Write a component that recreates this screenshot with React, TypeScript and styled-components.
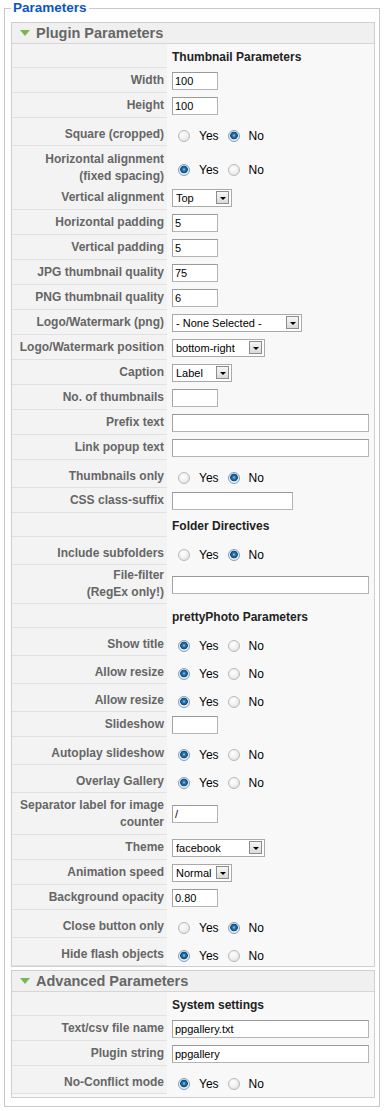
import React from "react";
import styled, { createGlobalStyle } from "styled-components";

const GlobalStyle = createGlobalStyle`
  html, body {
    margin: 0;
    padding: 0;
    background: #ffffff;
  }
  body {
    font-family: "Liberation Sans", Arial, Helvetica, sans-serif;
    font-size: 12px;
    color: #333333;
  }
  #root {
    width: 386px;
  }
`;

const ParamsFieldset = styled.fieldset`
  margin: 0 6px 0 4px;
  padding: 6px 4px 8px 6px;
  border: 1px solid #c9c9c9;
  min-width: 0;
  legend {
    padding: 0 2px;
    font-size: 13.5px;
    line-height: 16px;
    font-weight: bold;
    color: #0b55c4;
  }
`;

const Panel = styled.div<{ $padBottom?: number }>`
  border: 1px solid #cfcfcf;
  background: #f8f8f8;
  padding-bottom: ${(p) => p.$padBottom ?? 0}px;
  & + & {
    margin-top: 3px;
  }
`;

const PanelHeader = styled.div`
  height: 20px;
  display: flex;
  align-items: center;
  gap: 6px;
  padding-left: 8px;
  background: #f0f0f0;
  border-bottom: 1px solid #d6d6d6;
  font-size: 14.5px;
  font-weight: bold;
  color: #666666;
`;

const Row = styled.div<{ $h: number }>`
  display: grid;
  grid-template-columns: 155px 1fr;
  height: ${(p) => p.$h}px;
`;

// label cell, $top pushes the text down to line up with radio buttons
const Key = styled.div<{ $top?: number }>`
  display: flex;
  align-items: center;
  justify-content: flex-end;
  padding: ${(p) => p.$top ?? 0}px 3px 0 6px;
  text-align: right;
  white-space: pre-line;
  background: #f3f3f3;
  border-bottom: 1px solid #e1e1e1;
  font-weight: bold;
  color: #666666;
  line-height: 17px;
`;

const Value = styled.div<{ $top?: number }>`
  display: flex;
  align-items: center;
  padding-left: 5px;
  padding-top: ${(p) => p.$top ?? 0}px;
`;

const SectionTitle = styled.span`
  font-weight: bold;
  color: #222222;
`;

const TextInput = styled.input<{ $w: number }>`
  box-sizing: border-box;
  width: ${(p) => p.$w}px;
  height: 18px;
  margin: 0;
  border: 1px solid #b4b4b4;
  border-top-color: #999999;
  border-left-color: #a3a3a3;
  padding: 0 2px;
  font: 11px "Liberation Sans", Arial, sans-serif;
  color: #000000;
  background: #ffffff;
  outline: none;
`;

const SelectBox = styled.div<{ $w: number }>`
  box-sizing: border-box;
  width: ${(p) => p.$w}px;
  height: 18px;
  border: 1px solid #a9a9a9;
  background: #ffffff;
  display: flex;
  align-items: center;
  justify-content: space-between;
  padding: 0 2px 0 3px;
  font-size: 11px;
  color: #000000;
  white-space: nowrap;
`;

const SelectArrow = styled.span`
  box-sizing: border-box;
  flex-shrink: 0;
  width: 13px;
  height: 13px;
  border: 1px solid #8c8c8c;
  background: linear-gradient(#f6f6f6, #dadada);
  display: flex;
  align-items: center;
  justify-content: center;
  &::after {
    content: "";
    border-left: 3px solid transparent;
    border-right: 3px solid transparent;
    border-top: 3px solid #000000;
    margin-top: 2px;
  }
`;

const RadioGroup = styled.div`
  display: flex;
  align-items: center;
`;

const RadioOption = styled.span`
  display: flex;
  align-items: center;
  margin-right: 3px;
  color: #000000;
`;

const RadioDot = styled.span<{ $on: boolean }>`
  box-sizing: border-box;
  width: 12px;
  height: 12px;
  border-radius: 50%;
  margin: 0 9px 0 6px;
  border: 1px solid ${(p) => (p.$on ? "#7f9fc2" : "#b9b9b9")};
  background: ${(p) =>
    p.$on
      ? "radial-gradient(circle at 50% 45%, #9ccbec 0, #2a78b0 1.5px, #0f4a78 3.5px, #eef2f6 4.2px, #d9e0e8 100%)"
      : "radial-gradient(circle at 40% 35%, #ffffff 0, #eeeeee 55%, #d4d4d4 100%)"};
`;

type Field =
  | { kind: "section"; title: string }
  | { kind: "text"; label: string; value: string; width: number; h?: number }
  | { kind: "select"; label: string; value: string; width: number }
  | { kind: "radio"; label: string; yes: boolean; h?: number };

const SMALL = 46;
const WIDE = 197;

const pluginFields: Field[] = [
  { kind: "section", title: "Thumbnail Parameters" },
  { kind: "text", label: "Width", value: "100", width: SMALL },
  { kind: "text", label: "Height", value: "100", width: SMALL },
  { kind: "radio", label: "Square (cropped)", yes: false },
  { kind: "radio", label: "Horizontal alignment\n(fixed spacing)", yes: true, h: 39 },
  { kind: "select", label: "Vertical alignment", value: "Top", width: 60 },
  { kind: "text", label: "Horizontal padding", value: "5", width: SMALL },
  { kind: "text", label: "Vertical padding", value: "5", width: SMALL },
  { kind: "text", label: "JPG thumbnail quality", value: "75", width: SMALL },
  { kind: "text", label: "PNG thumbnail quality", value: "6", width: SMALL },
  { kind: "select", label: "Logo/Watermark (png)", value: "- None Selected -", width: 130 },
  { kind: "select", label: "Logo/Watermark position", value: "bottom-right", width: 93 },
  { kind: "select", label: "Caption", value: "Label", width: 60 },
  { kind: "text", label: "No. of thumbnails", value: "", width: SMALL },
  { kind: "text", label: "Prefix text", value: "", width: WIDE },
  { kind: "text", label: "Link popup text", value: "", width: WIDE },
  { kind: "radio", label: "Thumbnails only", yes: false },
  { kind: "text", label: "CSS class-suffix", value: "", width: 121 },
  { kind: "section", title: "Folder Directives" },
  { kind: "radio", label: "Include subfolders", yes: false },
  { kind: "text", label: "File-filter\n(RegEx only!)", value: "", width: WIDE, h: 39 },
  { kind: "section", title: "prettyPhoto Parameters" },
  { kind: "radio", label: "Show title", yes: true },
  { kind: "radio", label: "Allow resize", yes: true },
  { kind: "radio", label: "Allow resize", yes: true },
  { kind: "text", label: "Slideshow", value: "", width: SMALL },
  { kind: "radio", label: "Autoplay slideshow", yes: true },
  { kind: "radio", label: "Overlay Gallery", yes: true },
  { kind: "text", label: "Separator label for image\ncounter", value: "/", width: SMALL, h: 42 },
  { kind: "select", label: "Theme", value: "facebook", width: 93 },
  { kind: "select", label: "Animation speed", value: "Normal", width: 60 },
  { kind: "text", label: "Background opacity", value: "0.80", width: SMALL },
  { kind: "radio", label: "Close button only", yes: false },
  { kind: "radio", label: "Hide flash objects", yes: true },
];

const advancedFields: Field[] = [
  { kind: "section", title: "System settings" },
  { kind: "text", label: "Text/csv file name", value: "ppgallery.txt", width: WIDE },
  { kind: "text", label: "Plugin string", value: "ppgallery", width: WIDE },
  { kind: "radio", label: "No-Conflict mode", yes: true },
];

const Arrow = () => (
  <svg width="10" height="6" viewBox="0 0 10 6">
    <polygon points="0,0 10,0 5,6" fill="#78b652" />
  </svg>
);

const FieldRow = ({ field }: { field: Field }) => {
  if (field.kind === "section") {
    return (
      <Row $h={24}>
        <Key />
        <Value $top={2}>
          <SectionTitle>{field.title}</SectionTitle>
        </Value>
      </Row>
    );
  }
  if (field.kind === "radio") {
    return (
      <Row $h={field.h ?? 28}>
        <Key $top={5}>{field.label}</Key>
        <Value $top={7}>
          <RadioGroup>
            <RadioOption>
              <RadioDot $on={field.yes} />
              Yes
            </RadioOption>
            <RadioOption>
              <RadioDot $on={!field.yes} />
              No
            </RadioOption>
          </RadioGroup>
        </Value>
      </Row>
    );
  }
  if (field.kind === "select") {
    return (
      <Row $h={25}>
        <Key>{field.label}</Key>
        <Value>
          <SelectBox $w={field.width}>
            {field.value}
            <SelectArrow />
          </SelectBox>
        </Value>
      </Row>
    );
  }
  return (
    <Row $h={field.h ?? 25}>
      <Key>{field.label}</Key>
      <Value>
        <TextInput type="text" $w={field.width} defaultValue={field.value} />
      </Value>
    </Row>
  );
};

const ParamPanel = ({ title, fields, padBottom }: { title: string; fields: Field[]; padBottom?: number }) => (
  <Panel $padBottom={padBottom}>
    <PanelHeader>
      <Arrow />
      {title}
    </PanelHeader>
    {fields.map((f, i) => (
      <FieldRow key={i} field={f} />
    ))}
  </Panel>
);

const App = () => {
  return (
    <>
      <GlobalStyle />
      <ParamsFieldset>
        <legend>Parameters</legend>
        <ParamPanel title="Plugin Parameters" fields={pluginFields} />
        <ParamPanel title="Advanced Parameters" fields={advancedFields} padBottom={3} />
      </ParamsFieldset>
    </>
  );
};

export default App;
